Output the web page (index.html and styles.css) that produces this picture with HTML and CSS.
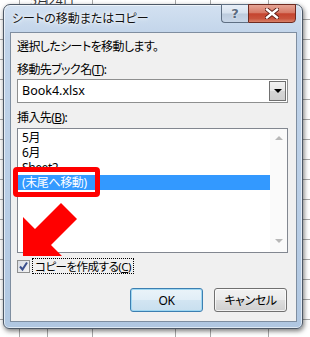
FILE: index.html
```html
<!DOCTYPE html>
<html lang="ja">
<head>
    <meta charset="UTF-8">
    <title>シートの移動またはコピー</title>
    <link rel="stylesheet" href="styles.css">
</head>
<body>
    <div class="screen">
        <div class="sheet-text">5月24日</div>
        <div class="window">
            <div class="titlebar">
                <span class="title">シートの移動またはコピー</span>
                <div class="caption-buttons">
                    <span class="btn-help">?</span>
                    <span class="btn-close">
                        <svg width="14" height="11" viewBox="0 0 14 11">
                            <path d="M2 1.5 L12 9.5 M12 1.5 L2 9.5" stroke="#5a1a12" stroke-width="4.2" stroke-linecap="square"/>
                            <path d="M2 1.5 L12 9.5 M12 1.5 L2 9.5" stroke="#fff" stroke-width="2.4" stroke-linecap="square"/>
                        </svg>
                    </span>
                </div>
            </div>
            <div class="client">
                <p class="line intro">選択したシートを移動します。</p>
                <p class="line label">移動先ブック名(<u>T</u>):</p>
                <div class="combo">
                    <span class="combo-value">Book4.xlsx</span>
                    <span class="combo-arrow"><span class="tri-down"></span></span>
                </div>
                <p class="line label label-list">挿入先(<u>B</u>):</p>
                <div class="listbox">
                    <ul class="items">
                        <li>5月</li>
                        <li>6月</li>
                        <li>Sheet2</li>
                        <li class="selected">(末尾へ移動)</li>
                    </ul>
                    <div class="scrollbar">
                        <span class="arrow-up"></span>
                        <span class="arrow-down"></span>
                    </div>
                </div>
                <div class="check-row">
                    <span class="checkbox">
                        <svg width="11" height="11" viewBox="0 0 11 11">
                            <path d="M2 5.5 L4.5 8.5 L9 1.5" fill="none" stroke="#3a4f8c" stroke-width="2"/>
                        </svg>
                    </span>
                    <span class="check-label">コピーを作成する(<u>C</u>)</span>
                </div>
                <div class="buttons">
                    <button class="btn btn-default">OK</button>
                    <button class="btn">キャンセル</button>
                </div>
            </div>
        </div>

        <!-- annotation marks drawn over the dialog -->
        <div class="mark-box"></div>
        <svg class="mark-arrow" width="310" height="337" viewBox="0 0 310 337">
            <polygon points="23,217 35,229 61,203 77,219 51,245 62,256 23,256" fill="#f00"/>
        </svg>
    </div>
</body>
</html>
```

FILE: styles.css
```css
body {
    margin: 0;
    background-color: #fff;
    font-family: "Noto Sans", "Noto Sans CJK JP", sans-serif;
    font-feature-settings: "palt" 1;
    font-size: 12px;
    color: #000;
}
.screen {
    position: relative;
    width: 310px;
    height: 337px;
    overflow: hidden;
    padding: 4px 0 0 3px;
    box-sizing: border-box;
    background-color: #fff;
    background-image:
        linear-gradient(90deg, transparent 19px, #a8a8a8 19px, #a8a8a8 20px, transparent 20px),
        linear-gradient(90deg, transparent 47px, #a8a8a8 47px, #a8a8a8 48px, transparent 48px),
        linear-gradient(90deg, transparent 92px, #a8a8a8 92px, #a8a8a8 93px, transparent 93px),
        linear-gradient(90deg, transparent 175px, #a8a8a8 175px, #a8a8a8 176px, transparent 176px),
        linear-gradient(90deg, transparent 210px, #a8a8a8 210px, #a8a8a8 211px, transparent 211px),
        linear-gradient(90deg, transparent 268px, #a8a8a8 268px, #a8a8a8 269px, transparent 269px),
        repeating-linear-gradient(180deg, transparent 0, transparent 19px, #a8a8a8 19px, #a8a8a8 20px);
}
.sheet-text {
    position: absolute;
    left: 30px;
    top: -9px;
    font-size: 12px;
    color: #333;
}
.window {
    position: relative;
    width: 300px;
    height: 325px;
    box-sizing: border-box;
    border: 1px solid #4d5866;
    border-radius: 7px 7px 6px 6px;
    background: linear-gradient(180deg, #d3e1f1 0%, #c0d3e9 10%, #b9cee6 60%, #b0c7e1 100%);
    box-shadow: 1px 2px 5px rgba(0, 0, 0, 0.55), inset 0 0 0 1px rgba(255, 255, 255, 0.6);
    display: flex;
    flex-direction: column;
}
.titlebar {
    height: 27px;
    display: flex;
    justify-content: space-between;
    align-items: flex-start;
}
.title {
    padding: 6px 0 0 8px;
    line-height: 16px;
    color: #111;
    text-shadow: 0 0 6px #fff, 0 0 3px #fff;
}
.caption-buttons {
    display: flex;
    margin: -1px 6px 0 0;
}
.btn-help,
.btn-close {
    height: 19px;
    box-sizing: border-box;
    display: flex;
    align-items: center;
    justify-content: center;
}
.btn-help {
    width: 27px;
    border: 1px solid #5f6f83;
    border-right: none;
    border-radius: 0 0 0 4px;
    background: linear-gradient(180deg, #e8eff8 0%, #d6e1ee 48%, #bccbdd 52%, #c9d7e8 100%);
    font-family: "DejaVu Sans", sans-serif;
    font-weight: bold;
    font-size: 13px;
    color: #5b6b80;
    text-shadow: 0 0 2px #fff;
}
.btn-close {
    width: 48px;
    border: 1px solid #6e2a20;
    border-radius: 0 0 4px 0;
    background: linear-gradient(180deg, #e6a596 0%, #d77a67 45%, #c5442f 52%, #c9543d 80%, #d9826a 100%);
}
.client {
    margin: 0 5px 6px 6px;
    flex: 1;
    border: 1px solid #7f8ea0;
    background-color: #f0f0f0;
    padding: 6px 8px 9px 6px;
}
.line {
    margin: 0;
    height: 15px;
    line-height: 15px;
    white-space: nowrap;
    letter-spacing: -0.6px;
}
.label {
    margin-top: 8px;
}
.label-list {
    margin-top: 7px;
}
.combo {
    margin-top: 2px;
    height: 24px;
    box-sizing: border-box;
    border: 1px solid #8e8f8f;
    background-color: #fff;
    display: flex;
    align-items: stretch;
}
.combo-value {
    flex: 1;
    padding-left: 4px;
    line-height: 22px;
    font-size: 12.5px;
}
.combo-arrow {
    width: 15px;
    margin: 1px;
    border: 1px solid #707070;
    background: linear-gradient(180deg, #f2f2f2 0%, #e6e6e6 50%, #d6d6d6 51%, #cfcfcf 100%);
    display: flex;
    align-items: center;
    justify-content: center;
}
.tri-down {
    width: 0;
    height: 0;
    border-left: 4px solid transparent;
    border-right: 4px solid transparent;
    border-top: 4px solid #000;
}
.listbox {
    margin-top: 3px;
    height: 125px;
    box-sizing: border-box;
    border: 1px solid #828790;
    background-color: #fff;
    display: flex;
}
.items {
    list-style: none;
    margin: 0;
    padding: 1px 0 0;
    flex: 1;
}
.items li {
    height: 15px;
    line-height: 15px;
    padding-left: 4px;
    letter-spacing: -0.4px;
}
.items .selected {
    background-color: #3399ff;
    color: #fff;
}
.scrollbar {
    width: 17px;
    background-color: #fafafa;
    display: flex;
    flex-direction: column;
    justify-content: space-between;
    align-items: center;
    padding: 7px 0 9px;
    box-sizing: border-box;
}
.arrow-up {
    width: 0;
    height: 0;
    border-left: 4px solid transparent;
    border-right: 4px solid transparent;
    border-bottom: 4px solid #b8b8b8;
}
.arrow-down {
    width: 0;
    height: 0;
    border-left: 4px solid transparent;
    border-right: 4px solid transparent;
    border-top: 4px solid #b8b8b8;
}
.check-row {
    margin-top: 5px;
    height: 16px;
    display: flex;
    align-items: center;
    gap: 2px;
}
.checkbox {
    width: 13px;
    height: 13px;
    box-sizing: border-box;
    border: 1px solid #8e8f8f;
    background: linear-gradient(135deg, #d8dce3 0%, #f4f4f4 100%);
    display: flex;
    align-items: center;
    justify-content: center;
}
.check-label {
    height: 16px;
    line-height: 15px;
    box-sizing: border-box;
    padding: 0 2px 0 2px;
    border: 1px dotted #000;
    white-space: nowrap;
    font-size: 11.5px;
    letter-spacing: -0.5px;
}
.buttons {
    margin-top: 14px;
    display: flex;
    justify-content: flex-end;
    gap: 11px;
    padding-right: 1px;
}
.btn {
    width: 73px;
    height: 24px;
    border: 1px solid #707070;
    border-radius: 3px;
    background: linear-gradient(180deg, #f2f2f2 0%, #ebebeb 48%, #dddddd 52%, #cfcfcf 100%);
    box-shadow: inset 0 0 0 1px rgba(255, 255, 255, 0.7);
    font-family: "Noto Sans", "Noto Sans CJK JP", sans-serif;
    font-feature-settings: "palt" 1;
    font-size: 12px;
    letter-spacing: -0.4px;
    color: #000;
    padding: 0;
}
.btn-default {
    border-color: #3c7fb1;
    background: linear-gradient(180deg, #eaf3f9 0%, #e1eef7 48%, #d2e5f2 52%, #c8dfef 100%);
    box-shadow: inset 0 0 0 1px #9ed7f2;
}
.mark-box {
    position: absolute;
    left: 13px;
    top: 167px;
    width: 87px;
    height: 30px;
    box-sizing: border-box;
    border: 5px solid #f00;
    border-radius: 4px;
}
.mark-arrow {
    position: absolute;
    left: 0;
    top: 0;
}
```
